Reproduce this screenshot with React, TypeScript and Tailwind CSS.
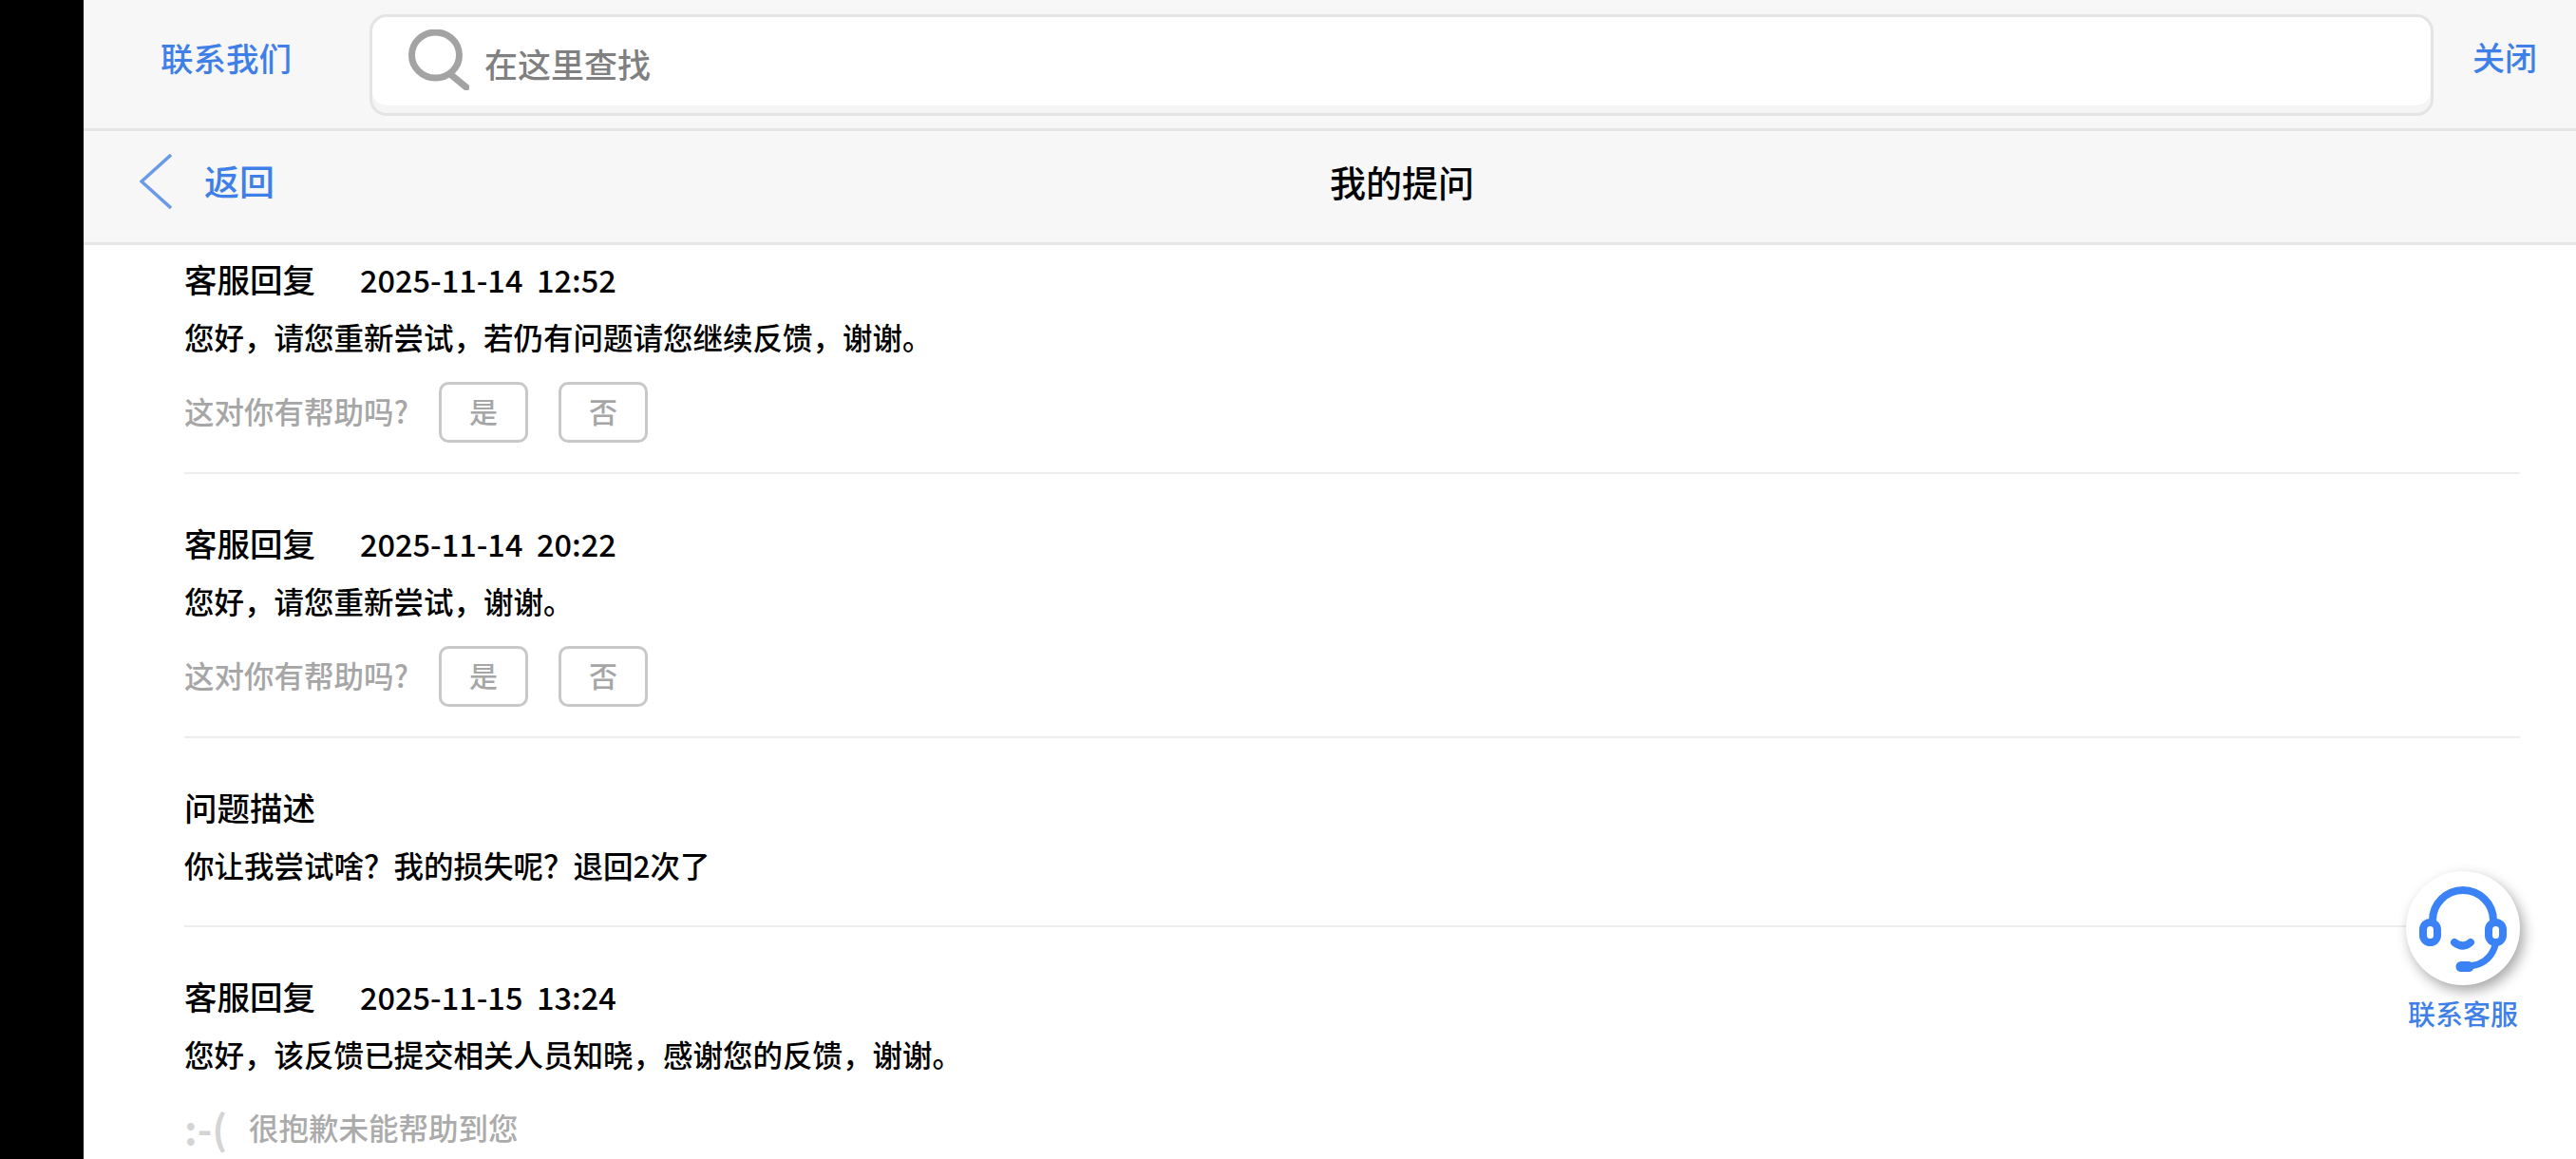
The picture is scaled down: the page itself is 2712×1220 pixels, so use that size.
type Reply = {
  title: string;
  time?: string;
  body: string;
  ask?: boolean;
  sorry?: boolean;
};

const replies: Reply[] = [
  {
    title: "客服回复",
    time: "2025-11-14  12:52",
    body: "您好\uFF0C请您重新尝试\uFF0C若仍有问题请您继续反馈\uFF0C谢谢。",
    ask: true,
  },
  { title: "客服回复", time: "2025-11-14  20:22", body: "您好\uFF0C请您重新尝试\uFF0C谢谢。", ask: true },
  { title: "问题描述", body: "你让我尝试啥\uFF1F我的损失呢\uFF1F退回2次了" },
  {
    title: "客服回复",
    time: "2025-11-15  13:24",
    body: "您好\uFF0C该反馈已提交相关人员知晓\uFF0C感谢您的反馈\uFF0C谢谢。",
    sorry: true,
  },
];

function SearchIcon() {
  return (
    <svg width="64" height="64" viewBox="0 0 64 64" fill="none" className="shrink-0">
      <ellipse cx="28.5" cy="27" rx="25" ry="24" stroke="#a3a3a3" strokeWidth="7" />
      <path d="M44 47L61 61" stroke="#a3a3a3" strokeWidth="7" strokeLinecap="round" />
    </svg>
  );
}

function HeadsetIcon() {
  return (
    <svg width="120" height="120" viewBox="0 0 120 120" fill="none">
      <path d="M28 52A32 32 0 0 1 92 52" stroke="#3b82f6" strokeWidth="8" />
      <rect x="18" y="54" width="15" height="21" rx="7.5" stroke="#3b82f6" strokeWidth="8" fill="white" />
      <rect x="87" y="54" width="15" height="21" rx="7.5" stroke="#3b82f6" strokeWidth="8" fill="white" />
      <path d="M51 75Q60 82 68 75" stroke="#3b82f6" strokeWidth="8" strokeLinecap="round" />
      <path d="M94 78Q88 98 66 100" stroke="#3b82f6" strokeWidth="7" />
      <path d="M58 100.5H66" stroke="#3b82f6" strokeWidth="11" strokeLinecap="round" />
    </svg>
  );
}

function ReplyBlock({ reply, last }: { reply: Reply; last: boolean }) {
  return (
    <section className={last ? "" : "border-b-2 border-[#eeeeee]"}>
      <div className="flex h-10 items-center text-[34.5px] font-medium text-black">
        <span>{reply.title}</span>
        {reply.time && <span className="ml-[47px] whitespace-pre text-[32.5px]">{reply.time}</span>}
      </div>
      <p className="mt-5 h-10 text-[31.5px] leading-10 font-medium text-black">{reply.body}</p>
      {reply.ask && (
        <div className="mt-[28px] flex items-center pb-[31px] text-[#a6a6a6]">
          <span className="-mt-[2px] w-[268px] text-[31.5px] font-medium">这对你有帮助吗?</span>
          <button className="h-16 w-[94px] rounded-[10px] border-[3px] border-[#c8c8c8] pb-1 text-[30px] font-medium">是</button>
          <button className="ml-8 h-16 w-[94px] rounded-[10px] border-[3px] border-[#c8c8c8] pb-1 text-[30px] font-medium">否</button>
        </div>
      )}
      {!reply.ask && !reply.sorry && <div className="h-[44px]" />}
      {reply.sorry && (
        <div className="mt-[34px] flex items-center text-[#ababab]">
          <span className="w-[68px] text-[42px] leading-[40px] font-bold text-[#d4d4d4]">:-(</span>
          <span className="text-[31.5px] font-medium">很抱歉未能帮助到您</span>
        </div>
      )}
    </section>
  );
}

export default function App() {
  return (
    <div className="relative flex h-[1220px] w-[2712px] overflow-hidden bg-white font-['Noto_Sans_CJK_SC',sans-serif]">
      <div className="w-[88px] shrink-0 bg-black" />
      <main className="flex min-w-0 flex-1 flex-col">
        <header className="flex h-[138px] shrink-0 items-start border-b-[3px] border-[#e5e5e5] bg-[#f7f7f7]">
          <a className="ml-[81px] mt-[36px] w-[140px] text-[34.5px] leading-[48px] font-medium text-[#3f7fe8]">联系我们</a>
          <div className="ml-[80px] mt-[15px] flex h-[107px] flex-1 items-start gap-[16px] rounded-[18px] border-[3px] border-[#e4e4e4] bg-white pl-[38px] pt-[13px] shadow-[inset_0_-8px_0_#f5f5f5]">
            <SearchIcon />
            <span className="mt-[12px] text-[35px] leading-[48px] font-medium text-[#808080]">在这里查找</span>
          </div>
          <a className="ml-[41px] mr-[41px] mt-[36px] text-[34px] leading-[48px] font-medium text-[#3f7fe8]">关闭</a>
        </header>
        <nav className="relative flex h-[120px] shrink-0 items-center border-b-[3px] border-[#e5e5e5] bg-[#f7f7f7] pb-[12px] pl-[59px]">
          <svg width="34" height="58" viewBox="0 0 34 58" fill="none">
            <path d="M33 1L2 29L33 57" stroke="#6a9be8" strokeWidth="3.5" />
          </svg>
          <span className="ml-[34px] text-[37px] font-medium text-[#3f7fe8]">返回</span>
          <h1 className="absolute left-[1312px] text-[38px] font-medium text-black">我的提问</h1>
        </nav>
        <div className="flex flex-col gap-[53px] pl-[106px] pr-[59px] pt-[16px]">
          {replies.map((reply, i) => (
            <ReplyBlock key={i} reply={reply} last={i === replies.length - 1} />
          ))}
        </div>
      </main>
      <div className="absolute left-[2533px] top-[917px] flex w-[120px] flex-col items-center">
        <div className="flex h-[120px] w-[120px] items-center justify-center rounded-full bg-white shadow-[4px_6px_14px_rgba(0,0,0,0.35)]">
          <HeadsetIcon />
        </div>
        <span className="mt-[9px] whitespace-nowrap text-[29px] leading-10 font-medium text-[#3f7fe8]">联系客服</span>
      </div>
    </div>
  );
}
